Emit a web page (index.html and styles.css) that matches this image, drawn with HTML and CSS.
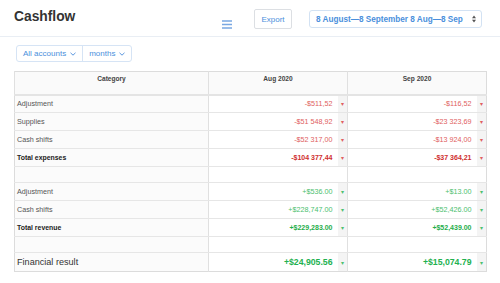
FILE: index.html
```html
<!DOCTYPE html>
<html lang="en">
<head>
    <meta charset="UTF-8">
    <title>Cashflow</title>
    <link rel="stylesheet" href="styles.css">
</head>
<body>
    <div class="topbar">
        <h1 class="title">Cashflow</h1>
        <svg class="menu-icon" width="10" height="9" viewBox="0 0 10 9">
            <path d="M0 1h10M0 4.5h10M0 8h10" stroke="#7aa8e2" stroke-width="1.4"/>
        </svg>
        <button class="export-btn">Export</button>
        <div class="date-select">
            <span>8 August—8 September 8 Aug—8 Sep</span>
            <svg width="4" height="8" viewBox="0 0 4 8">
                <path d="M0 3.2L2 0.6L4 3.2Z M0 4.8L2 7.4L4 4.8Z" fill="#555"/>
            </svg>
        </div>
    </div>

    <div class="filters">
        <div class="filter">All accounts
            <svg width="6" height="4" viewBox="0 0 6 4"><path d="M0.5 0.8L3 3.2L5.5 0.8" stroke="#5a96de" stroke-width="1" fill="none"/></svg>
        </div>
        <div class="filter">months
            <svg width="6" height="4" viewBox="0 0 6 4"><path d="M0.5 0.8L3 3.2L5.5 0.8" stroke="#5a96de" stroke-width="1" fill="none"/></svg>
        </div>
    </div>

    <table class="cash-table">
        <colgroup>
            <col class="c-cat">
            <col class="c-val">
            <col class="c-arr">
            <col class="c-val">
            <col class="c-arr">
        </colgroup>
        <thead>
            <tr>
                <th>Category</th>
                <th colspan="2">Aug 2020</th>
                <th colspan="2">Sep 2020</th>
            </tr>
        </thead>
        <tbody>
            <tr class="neg">
                <td class="cat">Adjustment</td>
                <td class="val">-$511,52</td><td class="arr">▾</td>
                <td class="val">-$116,52</td><td class="arr">▾</td>
            </tr>
            <tr class="neg">
                <td class="cat">Supplies</td>
                <td class="val">-$51 548,92</td><td class="arr">▾</td>
                <td class="val">-$23 323,69</td><td class="arr">▾</td>
            </tr>
            <tr class="neg">
                <td class="cat">Cash shifts</td>
                <td class="val">-$52 317,00</td><td class="arr">▾</td>
                <td class="val">-$13 924,00</td><td class="arr">▾</td>
            </tr>
            <tr class="neg total">
                <td class="cat">Total expenses</td>
                <td class="val">-$104 377,44</td><td class="arr">▾</td>
                <td class="val">-$37 364,21</td><td class="arr">▾</td>
            </tr>
            <tr class="spacer">
                <td class="cat"></td><td colspan="2"></td><td colspan="2"></td>
            </tr>
            <tr class="pos">
                <td class="cat">Adjustment</td>
                <td class="val">+$536.00</td><td class="arr">▾</td>
                <td class="val">+$13.00</td><td class="arr">▾</td>
            </tr>
            <tr class="pos">
                <td class="cat">Cash shifts</td>
                <td class="val">+$228,747.00</td><td class="arr">▾</td>
                <td class="val">+$52,426.00</td><td class="arr">▾</td>
            </tr>
            <tr class="pos total">
                <td class="cat">Total revenue</td>
                <td class="val">+$229,283.00</td><td class="arr">▾</td>
                <td class="val">+$52,439.00</td><td class="arr">▾</td>
            </tr>
            <tr class="spacer">
                <td class="cat"></td><td colspan="2"></td><td colspan="2"></td>
            </tr>
            <tr class="pos result">
                <td class="cat">Financial result</td>
                <td class="val">+$24,905.56</td><td class="arr">▾</td>
                <td class="val">+$15,074.79</td><td class="arr">▾</td>
            </tr>
        </tbody>
    </table>
</body>
</html>
```

FILE: styles.css
```css
body {
    margin: 0;
    padding: 0;
    background: #fff;
    font-family: 'Liberation Sans', Arial, sans-serif;
    color: #333;
}

.topbar {
    display: flex;
    align-items: flex-start;
    height: 36px;
    padding: 0 18px 0 14px;
    border-bottom: 1px solid #e9eef4;
}

.title {
    flex: 1;
    margin: 9px 0 0 0;
    font-size: 13.8px;
    line-height: 16px;
    font-weight: bold;
    color: #333;
}

.menu-icon {
    display: block;
    margin: 20px 22px 0 0;
}

.export-btn {
    margin: 9px 17px 0 0;
    width: 38px;
    height: 20px;
    padding: 0;
    background: #fff;
    border: 1px solid #dcdfe3;
    border-radius: 2px;
    color: #4a8fdc;
    font-family: inherit;
    font-size: 8px;
}

.date-select {
    display: flex;
    align-items: center;
    justify-content: space-between;
    box-sizing: border-box;
    margin-top: 10px;
    width: 173px;
    height: 18px;
    padding: 0 5px 0 6px;
    border: 1px solid #d3e2f3;
    border-radius: 3px;
    color: #4a8fdc;
    font-size: 8.2px;
    font-weight: bold;
    white-space: nowrap;
}

.filters {
    display: inline-flex;
    margin: 8px 0 0 16px;
    height: 17px;
    border: 1px solid #d6e4f5;
    border-radius: 3px;
    box-sizing: border-box;
}

.filter {
    display: flex;
    align-items: center;
    gap: 4px;
    padding: 0 6px;
    color: #4a8fdc;
    font-size: 8px;
    white-space: nowrap;
}

.filter + .filter {
    border-left: 1px solid #d6e4f5;
}

.cash-table {
    margin: 9px 0 0 14px;
    width: 473px;
    table-layout: fixed;
    border-collapse: collapse;
    border: 1px solid #dcdcdc;
    font-size: 7.2px;
}

.c-cat { width: 194px; }
.c-val { width: 129px; }
.c-arr { width: 10px; }

.cash-table th {
    height: 23px;
    padding: 3px 0 0 0;
    vertical-align: top;
    background: #fafafa;
    border-bottom: 2px solid #e4e4e4;
    border-left: 1px solid #e0e0e0;
    font-size: 6.6px;
    font-weight: bold;
    color: #444;
    text-align: center;
    box-sizing: border-box;
}

.cash-table td {
    height: 18px;
    padding: 0;
    border-bottom: 1px solid #e6e6e6;
    box-sizing: border-box;
}

.cash-table .cat {
    padding-left: 2px;
    background: #fbfbfb;
    border-right: 1px solid #e0e0e0;
    color: #555;
}

.cash-table .val {
    text-align: right;
    padding-right: 5px;
}

.cash-table .arr {
    background: #f4f4f4;
    text-align: center;
    font-size: 6px;
}

.cash-table .arr + .val,
.spacer td + td + td {
    border-left: 1px solid #e0e0e0;
}

.neg .val, .neg .arr { color: #e06060; }
.pos .val, .pos .arr { color: #4cc06e; }

.total .cat { font-weight: bold; font-size: 6.9px; color: #222; }
.neg.total .val { color: #cf2e2e; font-weight: bold; font-size: 7px; }
.pos.total .val { color: #1fae4b; font-weight: bold; font-size: 7px; }

.spacer td {
    height: 16px;
}

.result td {
    height: 19px;
    border-bottom: none;
}

.result .cat {
    font-size: 9.1px;
    color: #333;
}

.result .val {
    font-size: 8.7px;
    font-weight: bold;
    color: #22b14f;
}
```
